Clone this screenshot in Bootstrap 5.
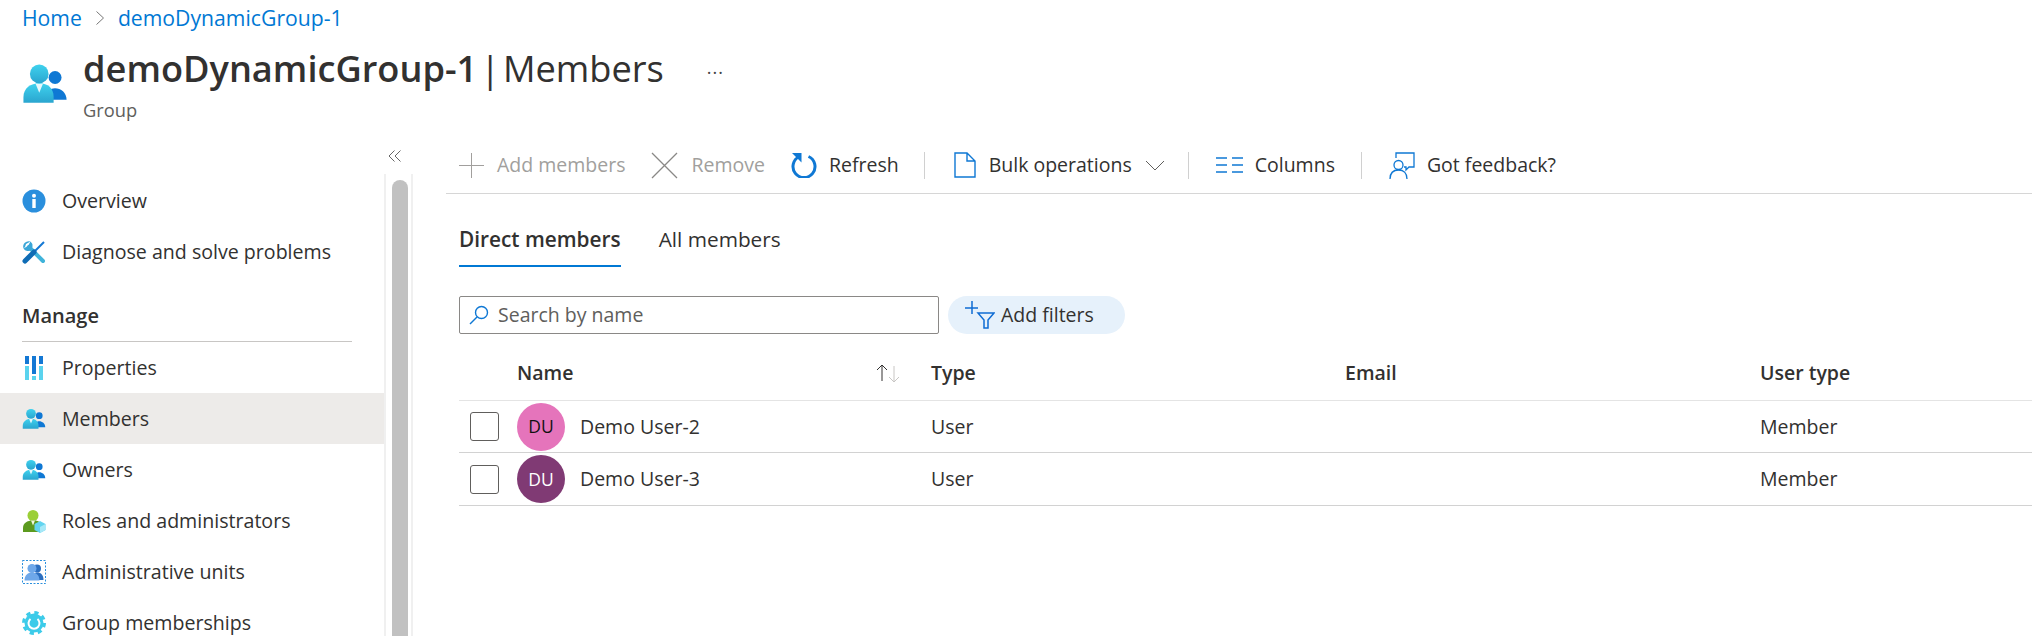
<!DOCTYPE html>
<html lang="en">
<head>
<meta charset="UTF-8">
<title>demoDynamicGroup-1 | Members</title>
<link href="https://cdn.jsdelivr.net/npm/bootstrap@5.3.0/dist/css/bootstrap.min.css" rel="stylesheet">
<style>
    html, body { height: 636px; overflow: hidden; }
    body { background: #fff; color: #323130; font-family: "Open Sans", "Noto Sans", sans-serif; font-size: 19.5px; }
    a { text-decoration: none; }
    .crumbs { height: 45px; padding: 0 0 10px 22px; font-size: 21.2px; gap: 13px; }
    .crumbs a { color: #0078d4; }
    .page-head { padding-left: 22px; height: 76px; }
    .head-icon { margin-right: 15px; }
    .page-head h1 { font-size: 36.2px; line-height: 47px; margin: 0; font-weight: 400; word-spacing: -6.5px; }
    .page-head h1 b { font-weight: 600; }
    .head-sub { font-size: 18.3px; color: #605e5c; line-height: 24px; margin-top: 6px; }
    .head-more { margin-left: 43px; font-size: 18px; line-height: 54px; color: #444; letter-spacing: 1px; }
    .main-row { height: 515px; }
    .side-nav { width: 384px; flex: none; position: relative; }
    .side-collapse { position: absolute; right: -18px; top: 28px; }
    .side-item { height: 51px; padding-left: 22px; gap: 16px; font-size: 19.6px; color: #323130; }
    .side-item.active-item { background: #edebe9; }
    .side-item svg { width: 24px; height: 24px; flex: none; }
    .side-head { height: 65px; margin: 0 32px 0 22px; padding-top: 24px; border-bottom: 1px solid #c8c6c4; font-weight: 600; font-size: 20px; }
    .side-top { padding-top: 54px; }
    .scroll-track { width: 29px; flex: none; border-left: 2px solid #f0f0f0; border-right: 2px solid #f0f0f0; padding: 0 3px 0 6px; margin-top: 53px; }
    .scroll-thumb { height: 100%; margin-top: 6px; background: #c1c1c1; border-radius: 8px 8px 0 0; }
    .content-pane { padding-left: 33px; min-width: 0; }
    .tool-bar { height: 57px; margin-top: 16px; border-bottom: 1px solid #d6d6d6; padding-left: 13px; }
    .tool-btn { gap: 12px; margin-right: 26px; }
    .tool-btn.off { gap: 13px; color: #a19f9d; }
    .tool-btn.before-sep { margin-right: 25px; }
    .tool-btn.tight { gap: 13px; margin-right: 23px; }
    .tool-sep { width: 1px; height: 27px; background: #d0d0d0; margin-right: 27px; }
    .tool-sep.wide { margin-right: 29px; }
    .tab-row { padding: 20px 0 0 13px; gap: 38px; height: 73px; font-size: 20.8px; }
    .tab-item { height: 53px; padding-top: 10px; }
    .tab-item.on { font-weight: 600; border-bottom: 2px solid #0078d4; }
    .filter-row { padding: 29px 0 0 13px; gap: 9px; height: 67px; }
    .find-box { width: 480px; height: 38px; border: 1px solid #8a8886; border-radius: 2px; padding-left: 9px; gap: 9px; color: #605e5c; }
    .filter-pill { width: 177px; height: 38px; background: #e6f1fb; border-radius: 19px; padding-left: 17px; gap: 6px; }
    .grid-wrap { margin-left: 13px; }
    .grid-row { display: grid; grid-template-columns: 58px 414px 414px 415px 1fr; align-items: center; border-bottom: 1px solid #d2d2d2; }
    .grid-head { height: 67px; padding-top: 11px; font-weight: 600; border-bottom-color: #e4e4e4; }
    .grid-body { height: 52px; }
    .grid-body:last-child { height: 53px; }
    .tick-box { width: 29px; height: 29px; border: 1px solid #605e5c; border-radius: 3px; margin-left: 11px; }
    .face { width: 48px; height: 48px; border-radius: 50%; font-size: 17.5px; }
    .face.pink { background: #e574bb; color: #111; }
    .face.plum { background: #803a74; color: #fff; }
    .name-cell { gap: 15px; }
    .sort-cell { padding-right: 29px; }
</style>
</head>
<body>
<svg width="0" height="0" class="d-block position-absolute">
    <defs>
        <linearGradient id="skyFill" x1="0" y1="0" x2="0" y2="1"><stop offset="0" stop-color="#3fd2ee"/><stop offset="1" stop-color="#2aa5cf"/></linearGradient>
        <symbol id="usersIcon" viewBox="0 0 32 32">
            <circle cx="23" cy="11.5" r="4.5" fill="#0f78d4"/>
            <path d="M16 27c0-5 3-8 7-8s8 3 8 8z" fill="#0f78d4"/>
            <circle cx="12" cy="9" r="6.5" fill="url(#skyFill)"/>
            <path d="M1 29v-4c0-6 5-9.500 11-9.500s10 3.500 10 9.500v4z" fill="url(#skyFill)"/>
            <path d="M9.500 16l2.500 6 2.500-6z" fill="#e8f8fc"/>
        </symbol>
    </defs>
</svg>

<nav class="crumbs d-flex align-items-center">
    <a href="#">Home</a>
    <svg width="10" height="16" viewBox="0 0 10 16" fill="none" stroke="#777"><path d="M1.500 1.500l7 6.500-7 6.500"/></svg>
    <a href="#">demoDynamicGroup-1</a>
</nav>

<header class="page-head d-flex">
    <svg width="46" height="46" class="head-icon mt-3 flex-none"><use href="#usersIcon"/></svg>
    <div>
        <h1><b>demoDynamicGroup-1</b> | Members</h1>
        <div class="head-sub">Group</div>
    </div>
    <div class="head-more">···</div>
</header>

<div class="main-row d-flex">
    <aside class="side-nav">
        <svg class="side-collapse" width="14" height="14" viewBox="0 0 14 14" fill="none" stroke="#666"><path d="M6.500 1.500L1 7l5.500 5.500M12.500 1.500L7 7l5.500 5.500"/></svg>
        <div class="side-top">
            <a href="#" class="side-item d-flex align-items-center">
                <svg viewBox="0 0 24 24"><circle cx="12" cy="12" r="11.500" fill="#2a8fdd"/><rect x="10.300" y="10" width="3.400" height="9" fill="#fff"/><circle cx="12" cy="6.800" r="2" fill="#fff"/></svg>
                Overview
            </a>
            <a href="#" class="side-item d-flex align-items-center">
                <svg viewBox="0 0 24 24" fill="none"><path d="M7 7l14 14" stroke="#3fb3da" stroke-width="4" stroke-linecap="round"/><path d="M8.500 1.500a5.500 5.500 0 0 0-7 7L3 7l1-3z" fill="#3aa6d8"/><path d="M1.500 8.500a5.500 5.500 0 0 0 8 1.500l1-3.500a5.500 5.500 0 0 0-2-5L6.500 5 5 6.500z" fill="#3aa6d8"/><path d="M22 2L12 12" stroke="#1478d4" stroke-width="2"/><path d="M12 12l-9 9" stroke="#0f6cb5" stroke-width="5" stroke-linecap="round"/></svg>
                Diagnose and solve problems
            </a>
            <div class="side-head">Manage</div>
            <a href="#" class="side-item d-flex align-items-center">
                <svg viewBox="0 0 24 24"><rect x="3" y="0" width="4" height="8" fill="#1478d4"/><rect x="3" y="10" width="4" height="14" fill="#5ad3ee"/><rect x="10" y="0" width="4" height="18" fill="#1478d4"/><rect x="10" y="20" width="4" height="4" fill="#5ad3ee"/><rect x="17" y="0" width="4" height="8" fill="#1478d4"/><rect x="17" y="10" width="4" height="14" fill="#5ad3ee"/></svg>
                Properties
            </a>
            <a href="#" class="side-item active-item d-flex align-items-center"><svg><use href="#usersIcon"/></svg>Members</a>
            <a href="#" class="side-item d-flex align-items-center"><svg><use href="#usersIcon"/></svg>Owners</a>
            <a href="#" class="side-item d-flex align-items-center">
                <svg viewBox="0 0 24 24"><circle cx="11" cy="6.500" r="5.500" fill="#9bcf37"/><path d="M1 23v-4c0-5 4-7.500 10-7.500s8 2 9 5v6.500z" fill="#5c9a1f"/><path d="M9 11.500l2 5 2-5z" fill="#f0f8e0"/><path d="M18 12l5.500 3v6L18 24l-5.500-3v-6z" fill="#62d4f0"/><path d="M18 18l5.500-3v6L18 24z" fill="#a6e8f7"/></svg>
                Roles and administrators
            </a>
            <a href="#" class="side-item d-flex align-items-center">
                <svg viewBox="0 0 24 24"><rect x=".5" y=".5" width="23" height="23" fill="none" stroke="#2a8fdd" stroke-dasharray="2 1.500"/><circle cx="15" cy="8.500" r="4" fill="#2c6fc0"/><path d="M10 20c0-5 2-7.500 5.500-7.500s6 2.500 6 7.500z" fill="#2c6fc0"/><circle cx="10" cy="8.500" r="4.500" fill="#6ea8ea"/><path d="M2.500 20.500c0-5 3-8 7.500-8s7.500 3 7.500 8z" fill="#6ea8ea"/></svg>
                Administrative units
            </a>
            <a href="#" class="side-item d-flex align-items-center">
                <svg viewBox="0 0 24 24"><circle cx="12" cy="12" r="9.500" fill="#3ccbe9"/><circle cx="12" cy="12" r="10.500" fill="none" stroke="#3ccbe9" stroke-width="3" stroke-dasharray="4.250 4"/><path d="M8.500 8a5.500 5.500 0 1 0 7 0" fill="none" stroke="#fff" stroke-width="2"/></svg>
                Group memberships
            </a>
        </div>
    </aside>
    <div class="scroll-track"><div class="scroll-thumb"></div></div>

    <main class="content-pane flex-grow-1">
        <div class="tool-bar d-flex align-items-center">
            <div class="tool-btn off d-flex align-items-center">
                <svg width="25" height="25" viewBox="0 0 25 25" stroke="#a19f9d" fill="none"><path d="M12.500 0v25M0 12.500h25"/></svg>
                <span>Add members</span>
            </div>
            <div class="tool-btn off d-flex align-items-center">
                <svg width="27" height="27" viewBox="0 0 27 27" stroke="#8a8886" stroke-width="1.300" fill="none"><path d="M1 1l25 25M26 1L1 26"/></svg>
                <span>Remove</span>
            </div>
            <div class="tool-btn before-sep d-flex align-items-center">
                <svg width="26" height="26" viewBox="0 0 26 26" fill="none"><path d="M8.500 4.500a11 11 0 1 0 9 0" stroke="#0f78d4" stroke-width="3"/><path d="M1 1h9.500v9.500z" fill="#0f78d4"/></svg>
                <span>Refresh</span>
            </div>
            <div class="tool-sep wide"></div>
            <div class="tool-btn tight d-flex align-items-center">
                <svg width="22" height="26" viewBox="0 0 22 26" fill="none" stroke="#0f78d4" stroke-width="1.400"><path d="M1 1h12l8 8v16H1zM13 1v8h8"/></svg>
                <span>Bulk operations</span>
                <svg width="20" height="11" viewBox="0 0 20 11" fill="none" stroke="#605e5c"><path d="M1 1l9 9 9-9"/></svg>
            </div>
            <div class="tool-sep"></div>
            <div class="tool-btn d-flex align-items-center">
                <svg width="27" height="18" viewBox="0 0 27 18" stroke="#0f78d4" stroke-width="1.400" fill="none"><path d="M0 2h11M0 9h11M0 16h11M16 2h11M16 9h11M16 16h11"/></svg>
                <span>Columns</span>
            </div>
            <div class="tool-sep"></div>
            <div class="tool-btn d-flex align-items-center">
                <svg width="26" height="27" viewBox="0 0 26 27" fill="none" stroke="#0f78d4" stroke-width="1.300"><path d="M7 6V1h18v14h-5l-3 3v-3h-2"/><circle cx="9.500" cy="13" r="4.500"/><path d="M1 27c0-6 3.500-9 8.500-9s8.500 3 8.500 9"/></svg>
                <span>Got feedback?</span>
            </div>
        </div>

        <div class="tab-row d-flex">
            <div class="tab-item on">Direct members</div>
            <div class="tab-item">All members</div>
        </div>

        <div class="filter-row d-flex">
            <div class="find-box d-flex align-items-center">
                <svg width="20" height="20" viewBox="0 0 20 20" fill="none" stroke="#0f78d4" stroke-width="1.400"><circle cx="12.500" cy="7.500" r="6"/><path d="M8 12l-7 7"/></svg>
                <span>Search by name</span>
            </div>
            <div class="filter-pill d-flex align-items-center">
                <svg width="30" height="28" viewBox="0 0 30 28" fill="none" stroke="#0f6cd4" stroke-width="1.500"><path d="M7 0v13M0 7h13M13 12h16l-6 7v8h-4v-8z"/></svg>
                <span>Add filters</span>
            </div>
        </div>

        <div class="grid-wrap">
            <div class="grid-row grid-head">
                <div></div>
                <div class="sort-cell d-flex align-items-center justify-content-between">
                    <span>Name</span>
                    <svg width="28" height="20" viewBox="0 0 28 20" fill="none"><path d="M8 18V2M3 7l5-5 5 5" stroke="#323130"/><path d="M20 3v16M15 14l5 5 5-5" stroke="#c8c6c4"/></svg>
                </div>
                <div>Type</div>
                <div>Email</div>
                <div>User type</div>
            </div>
            <div class="grid-row grid-body">
                <div><div class="tick-box"></div></div>
                <div class="name-cell d-flex align-items-center">
                    <div class="face pink d-flex align-items-center justify-content-center">DU</div>
                    <span>Demo User-2</span>
                </div>
                <div>User</div>
                <div></div>
                <div>Member</div>
            </div>
            <div class="grid-row grid-body">
                <div><div class="tick-box"></div></div>
                <div class="name-cell d-flex align-items-center">
                    <div class="face plum d-flex align-items-center justify-content-center">DU</div>
                    <span>Demo User-3</span>
                </div>
                <div>User</div>
                <div></div>
                <div>Member</div>
            </div>
        </div>
    </main>
</div>
<script src="https://cdn.jsdelivr.net/npm/bootstrap@5.3.0/dist/js/bootstrap.bundle.min.js"></script>
</body>
</html>
